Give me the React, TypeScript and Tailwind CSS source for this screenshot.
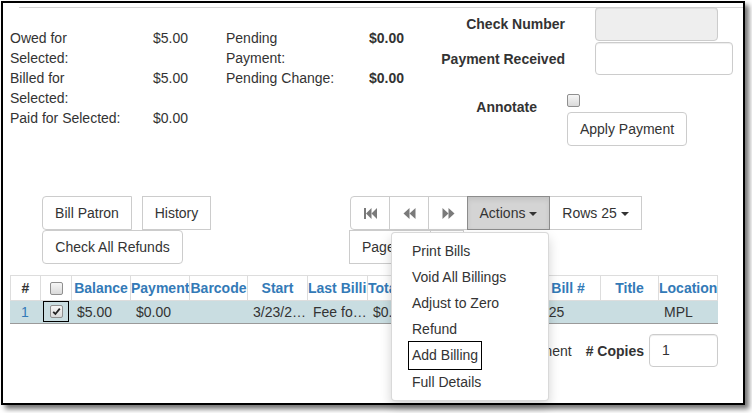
import React from 'react'

const btn = 'h-[34px] border border-[#ccc] bg-white text-[#333] leading-[20px] whitespace-nowrap'

function Caret() {
  return (
    <span className="ml-[4px] inline-block w-0 h-0 align-middle border-t-[4px] border-t-[#333] border-x-[4px] border-x-transparent" />
  )
}

function Box({ checked }: { checked?: boolean }) {
  return (
    <span className="inline-flex w-[13px] h-[13px] items-center justify-center rounded-[2px] border border-[#8f8f8f] bg-linear-to-b from-[#f6f6f6] to-[#dadada]">
      {checked && (
        <svg width="9" height="9" viewBox="0 0 9 9">
          <path d="M1.2 4.8 L3.4 7 L7.8 1.6" stroke="#222" strokeWidth="1.8" fill="none" />
        </svg>
      )}
    </span>
  )
}

function PagerIcon({ kind }: { kind: 'first' | 'prev' | 'next' }) {
  return (
    <svg width="13" height="11" viewBox="0 0 13 11" fill="#7a7a7a">
      {kind === 'first' && (
        <>
          <rect x="0" y="0" width="2" height="11" />
          <polygon points="2,5.5 7.5,0 7.5,11" />
          <polygon points="7.5,5.5 13,0 13,11" />
        </>
      )}
      {kind === 'prev' && (
        <>
          <polygon points="0.5,5.5 6.5,0 6.5,11" />
          <polygon points="6.5,5.5 12.5,0 12.5,11" />
        </>
      )}
      {kind === 'next' && (
        <>
          <polygon points="12.5,5.5 6.5,0 6.5,11" />
          <polygon points="6.5,5.5 0.5,0 0.5,11" />
        </>
      )}
    </svg>
  )
}

// the two columns after "Total" sit fully under the open menu
const columns = [
  { label: '#', dark: true, value: '1', link: true },
  { label: '', box: true },
  { label: 'Balance', value: '$5.00' },
  { label: 'Payment', value: '$0.00' },
  { label: 'Barcode', value: '' },
  { label: 'Start', value: '3/23/2018' },
  { label: 'Last Billing Type', value: 'Fee for Damaged Item' },
  { label: 'Total Billed', value: '$0.00' },
  { label: '', value: '' },
  { label: '', value: '' },
  { label: 'Bill #', value: '125' },
  { label: 'Title', value: '' },
  { label: 'Location', value: 'MPL' },
]

const menuItems = ['Print Bills', 'Void All Billings', 'Adjust to Zero', 'Refund', 'Add Billing', 'Full Details']

export default function App() {
  return (
    <div className="w-[752px] h-[413px] overflow-hidden bg-white font-['Liberation_Sans',Arial,sans-serif] text-[14px] leading-[20px] text-[#333]">
      <div className="ml-px mt-px w-[744px] h-[404px] border-2 border-black bg-white shadow-[4px_4px_5px_rgba(0,0,0,0.55)]">
        <div className="ml-[16px] mt-[4px] border-t border-[#d4d4d4]" />

        {/* totals + payment form */}
        <div className="flex h-[138px]">
          <div className="ml-[7px] mt-[20px] grid grid-cols-[143px_73px_143px_auto] content-start">
            <div className="w-[114px]">Owed for Selected:</div>
            <div>$5.00</div>
            <div className="w-[111px]">Pending Payment:</div>
            <div className="font-bold">$0.00</div>

            <div className="w-[114px]">Billed for Selected:</div>
            <div>$5.00</div>
            <div className="w-[111px]">Pending Change:</div>
            <div className="font-bold">$0.00</div>

            <div className="w-[114px]">Paid for Selected:</div>
            <div>$0.00</div>
          </div>

          <div className="ml-auto mr-[10px] w-[293px]">
            <div className="-mt-px flex items-center">
              <div className="w-[125px] text-right font-bold">Check Number</div>
              <div className="ml-[30px] w-[123px] h-[34px] rounded-[4px] border border-[#ccc] bg-[#eee] shadow-[inset_0_1px_1px_rgba(0,0,0,0.075)]" />
            </div>
            <div className="mt-px flex items-center">
              <div className="w-[125px] text-right font-bold">Payment Received</div>
              <div className="ml-[30px] w-[138px] h-[33px] rounded-[4px] border border-[#ccc] bg-white shadow-[inset_0_1px_1px_rgba(0,0,0,0.075)]" />
            </div>
            <div className="mt-[19px] flex items-start">
              <div className="mt-[3px] w-[97px] text-right font-bold">Annotate</div>
              <div className="ml-[30px] flex flex-col items-start">
                <Box />
                <button type="button" className={`${btn} mt-[5px] w-[120px] rounded-[4px]`}>
                  Apply Payment
                </button>
              </div>
            </div>
          </div>
        </div>

        {/* action buttons + pager */}
        <div className="mt-[50px] flex">
          <div className="ml-[39px] w-[308px] flex flex-col items-start">
            <div className="flex gap-[10px]">
              <button type="button" className={`${btn} w-[90px] rounded-l-[4px]`}>Bill Patron</button>
              <button type="button" className={`${btn} w-[69px]`}>History</button>
            </div>
            <button type="button" className={`${btn} w-[141px] rounded-[4px]`}>Check All Refunds</button>
          </div>

          <div className="flex flex-col">
            <div className="flex">
              <button type="button" className={`${btn} w-[40px] rounded-l-[4px] flex items-center justify-center`}>
                <PagerIcon kind="first" />
              </button>
              <button type="button" className={`${btn} -ml-px w-[40px] flex items-center justify-center`}>
                <PagerIcon kind="prev" />
              </button>
              <button type="button" className={`${btn} -ml-px w-[40px] flex items-center justify-center`}>
                <PagerIcon kind="next" />
              </button>
              <div className="relative -ml-px">
                <button
                  type="button"
                  className="h-[34px] w-[83px] border border-[#8c8c8c] bg-[#d4d4d4] text-[#333] shadow-[inset_0_3px_5px_rgba(0,0,0,0.08)]"
                >
                  Actions
                  <Caret />
                </button>
                <div className="absolute right-px top-[36px] z-10 w-[158px] rounded-[4px] border border-[rgba(0,0,0,0.15)] bg-white py-[5px] shadow-[0_6px_12px_rgba(0,0,0,0.175)]">
                  {menuItems.map((item) => (
                    <div key={item} className="px-[20px] py-[3px] leading-[20px] whitespace-nowrap">
                      {item === 'Add Billing' ? (
                        <span className="inline-block leading-[21px] outline outline-1 outline-black outline-offset-[3px]">
                          {item}
                        </span>
                      ) : (
                        item
                      )}
                    </div>
                  ))}
                </div>
              </div>
              <button type="button" className={`${btn} -ml-px w-[93px]`}>
                Rows 25
                <Caret />
              </button>
            </div>
            <div className="flex -ml-px">
              <button type="button" className={`${btn} w-[82px] text-left pl-[12px]`}>Page</button>
              <button type="button" className={`${btn} -ml-px w-[34px]`} />
            </div>
          </div>
        </div>

        {/* bills grid */}
        <div className="ml-[7px] mt-[11px] w-[708px]">
          <div className="grid grid-cols-[30px_31px_59px_59px_58px_60px_60px_56px_56px_56px_65px_58px_60px] border-t border-b border-[#ddd]">
            {columns.map((c, i) => (
              <div
                key={i}
                className={`h-[24px] flex items-center justify-center overflow-hidden whitespace-nowrap border-l border-[#ddd] font-bold ${
                  i === columns.length - 1 ? 'border-r' : ''
                } ${c.dark ? 'text-[#333]' : 'text-[#337ab7]'}`}
              >
                {c.box ? <Box /> : <span className="block min-w-0 max-w-full">{c.label}</span>}
              </div>
            ))}
          </div>
          <div className="grid grid-cols-[30px_31px_59px_59px_58px_60px_60px_56px_56px_56px_65px_58px_60px] bg-[#c9dde1] border-b border-[#9a9a9a]">
            {columns.map((c, i) =>
              c.box ? (
                <div key={i} className="h-[22px] px-[3px] pr-[2px]">
                  <div className="h-[21px] border border-black flex items-center justify-center">
                    <Box checked />
                  </div>
                </div>
              ) : (
                <div
                  key={i}
                  className={`h-[22px] leading-[22px] overflow-hidden whitespace-nowrap text-ellipsis ${
                    c.link ? 'text-center text-[#337ab7]' : 'pl-[6px]'
                  }`}
                >
                  {c.value}
                </div>
              )
            )}
          </div>
        </div>

        {/* copies */}
        <div className="ml-[7px] mt-[10px] w-[708px] flex items-center justify-end">
          <span>Adjustment</span>
          <span className="ml-[14px] font-bold"># Copies</span>
          <div className="ml-[5px] w-[69px] h-[33px] rounded-[4px] border border-[#ccc] bg-white pl-[12px] leading-[31px] shadow-[inset_0_1px_1px_rgba(0,0,0,0.075)]">
            1
          </div>
        </div>
      </div>
    </div>
  )
}
